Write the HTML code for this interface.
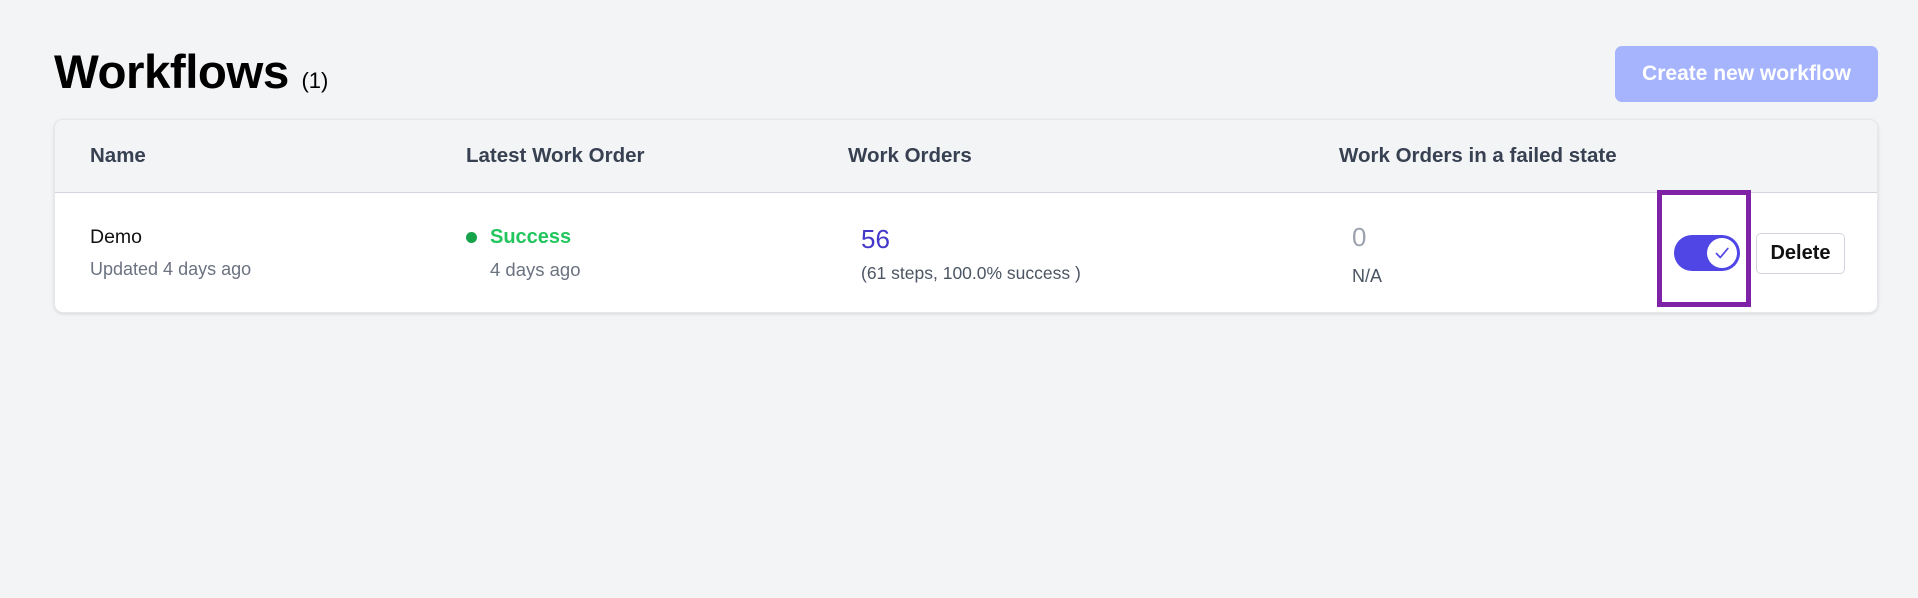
<!DOCTYPE html>
<html><head><meta charset="utf-8"><style>
*{margin:0;padding:0;box-sizing:border-box}
body{width:1918px;height:598px;background:#f3f4f6;font-family:"Liberation Sans",sans-serif;position:relative;overflow:hidden}
.a{position:absolute;white-space:nowrap}
.h{top:144px;font-size:20.5px;font-weight:bold;color:#374151}
</style></head><body>
<div class="a" style="left:54px;top:45px;font-size:47.5px;font-weight:bold;color:#000;line-height:56px;letter-spacing:-0.5px">Workflows <span style="font-size:22px;font-weight:normal;letter-spacing:0">(1)</span></div>
<div class="a" style="left:1615px;top:46px;width:263px;height:56px;background:#a5b4fc;border-radius:7px;color:#fff;font-weight:bold;font-size:21px;line-height:56px;text-align:center">Create new workflow</div>
<div class="a" style="left:54px;top:119px;width:1824px;height:194px;background:#fff;border:1px solid #e5e7eb;border-radius:9px;box-shadow:0 1px 3px rgba(0,0,0,.12);overflow:hidden">
<div style="height:73px;background:#f3f4f6;border-bottom:1px solid #d1d5db"></div>
</div>
<div class="a h" style="left:90px">Name</div>
<div class="a h" style="left:466px">Latest Work Order</div>
<div class="a h" style="left:848px">Work Orders</div>
<div class="a h" style="left:1339px">Work Orders in a failed state</div>

<div class="a" style="left:90px;top:226px;font-size:19.5px;color:#111">Demo</div>
<div class="a" style="left:90px;top:259px;font-size:18px;color:#6b7280">Updated 4 days ago</div>
<div class="a" style="left:466px;top:232px;width:11px;height:11px;border-radius:50%;background:#16a34a"></div>
<div class="a" style="left:490px;top:226px;font-size:20px;font-weight:bold;color:#22c55e">Success</div>
<div class="a" style="left:490px;top:259px;font-size:18.5px;color:#6b7280">4 days ago</div>
<div class="a" style="left:861px;top:224px;font-size:26px;color:#4338ca">56</div>
<div class="a" style="left:861px;top:263px;font-size:17.5px;color:#4b5563">(61 steps, 100.0% success )</div>
<div class="a" style="left:1352px;top:222px;font-size:26px;color:#9ca3af">0</div>
<div class="a" style="left:1352px;top:266px;font-size:18px;color:#4b5563">N/A</div>

<div class="a" style="left:1657px;top:190px;width:94px;height:117px;border:5px solid #7e22a8"></div>
<div class="a" style="left:1674px;top:235px;width:66px;height:36px;border-radius:18px;background:#4f46e5"></div>
<div class="a" style="left:1707px;top:238px;width:30px;height:30px;border-radius:50%;background:#fff"></div>
<svg class="a" style="left:1707px;top:238px" width="30" height="30" viewBox="0 0 30 30"><path d="M9.5 15.5l3.8 4 7.5-9" fill="none" stroke="#4f46e5" stroke-width="1.7" stroke-linecap="round" stroke-linejoin="round"/></svg>
<div class="a" style="left:1756px;top:233px;width:89px;height:41px;border:1px solid #d1d5db;border-radius:5px;background:#fff;font-size:20px;font-weight:bold;color:#111;line-height:39px;text-align:center">Delete</div>
</body></html>
